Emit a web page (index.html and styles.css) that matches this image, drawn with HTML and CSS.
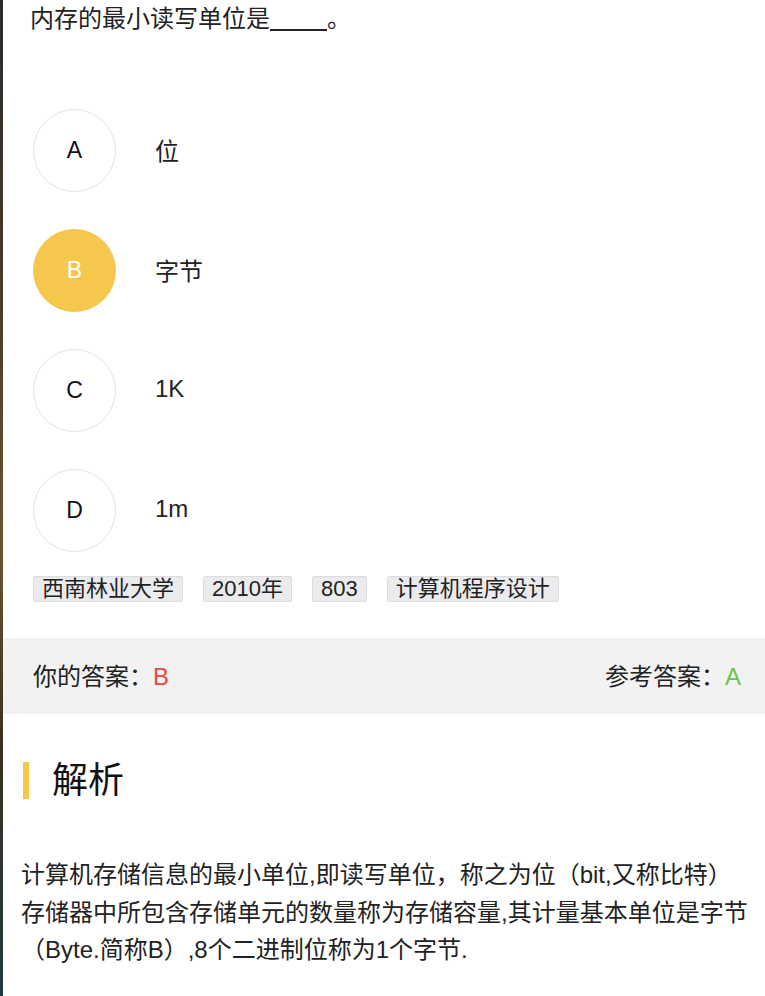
FILE: index.html
```html
<!DOCTYPE html>
<html lang="zh-CN">
<head>
    <meta charset="UTF-8">
    <meta name="viewport" content="width=device-width, initial-scale=1.0">
    <title>题目解析</title>
    <link rel="stylesheet" href="styles.css">
</head>
<body>
    <div class="page">
        <p class="question">内存的最小读写单位是<span class="blank"></span>。</p>

        <ul class="options">
            <li class="option"><span class="letter">A</span><span class="option-text">位</span></li>
            <li class="option chosen"><span class="letter">B</span><span class="option-text">字节</span></li>
            <li class="option"><span class="letter">C</span><span class="option-text">1K</span></li>
            <li class="option"><span class="letter">D</span><span class="option-text">1m</span></li>
        </ul>

        <div class="tags">
            <span class="tag">西南林业大学</span>
            <span class="tag">2010年</span>
            <span class="tag">803</span>
            <span class="tag">计算机程序设计</span>
        </div>

        <div class="answers">
            <div>你的答案：<span class="wrong">B</span></div>
            <div>参考答案：<span class="right">A</span></div>
        </div>

        <h2 class="section-title">解析</h2>
        <p class="analysis">计算机存储信息的最小单位,即读写单位，称之为位（bit,又称比特）<br>存储器中所包含存储单元的数量称为存储容量,其计量基本单位是字节（Byte.简称B）,8个二进制位称为1个字节.</p>
    </div>
</body>
</html>
```

FILE: styles.css
```css
body {
    margin: 0;
    background: linear-gradient(180deg, #2b2a2c 0%, #4a3a28 30%, #6b5530 55%, #3a3020 75%, #1f3a40 100%);
    font-family: "Liberation Sans", "Noto Sans CJK SC", sans-serif;
    color: #222;
}
.page {
    margin-left: 3px;
    min-height: 996px;
    background: #fff;
    overflow: hidden;
}
.question {
    margin: 0;
    padding: 3px 27px 0;
    font-size: 24px;
    line-height: 32px;
}
.blank {
    display: inline-block;
    width: 57px;
    height: 26px;
    border-bottom: 2px solid #222;
    vertical-align: top;
}
.options {
    list-style: none;
    margin: 74px 0 0;
    padding: 0 0 0 30px;
    display: flex;
    flex-direction: column;
    gap: 37px;
}
.option {
    display: flex;
    align-items: center;
    gap: 39px;
    font-size: 24px;
}
.option-text {
    margin-top: -3px;
}
.letter {
    width: 83px;
    height: 83px;
    box-sizing: border-box;
    border: 1px solid #e2e2e2;
    border-radius: 50%;
    display: flex;
    align-items: center;
    justify-content: center;
    font-size: 23px;
    color: #111;
}
.chosen .letter {
    background: #f5c74c;
    border-color: #f5c74c;
    color: #fff;
}
.tags {
    margin-top: 24px;
    padding-left: 30px;
    display: flex;
    gap: 20px;
}
.tag {
    font-size: 22px;
    line-height: 24px;
    padding: 0 8px;
    background: #ebebed;
    border: 1px solid #dcdcdc;
    border-radius: 2px;
    color: #222;
}
.answers {
    margin-top: 36px;
    height: 76px;
    background: #f2f2f2;
    display: flex;
    align-items: center;
    justify-content: space-between;
    padding: 0 24px 4px 30px;
    box-sizing: border-box;
    font-size: 24px;
}
.wrong { color: #e8473d; }
.right { color: #6cc444; }
.section-title {
    margin: 48px 0 0 20px;
    border-left: 6px solid #f5c74c;
    padding-left: 23px;
    height: 37px;
    line-height: 37px;
    font-size: 36px;
    font-weight: normal;
    color: #111;
}
.analysis {
    margin: 57px 0 0;
    padding-left: 18px;
    font-size: 24px;
    line-height: 37.5px;
    color: #222;
}
```
